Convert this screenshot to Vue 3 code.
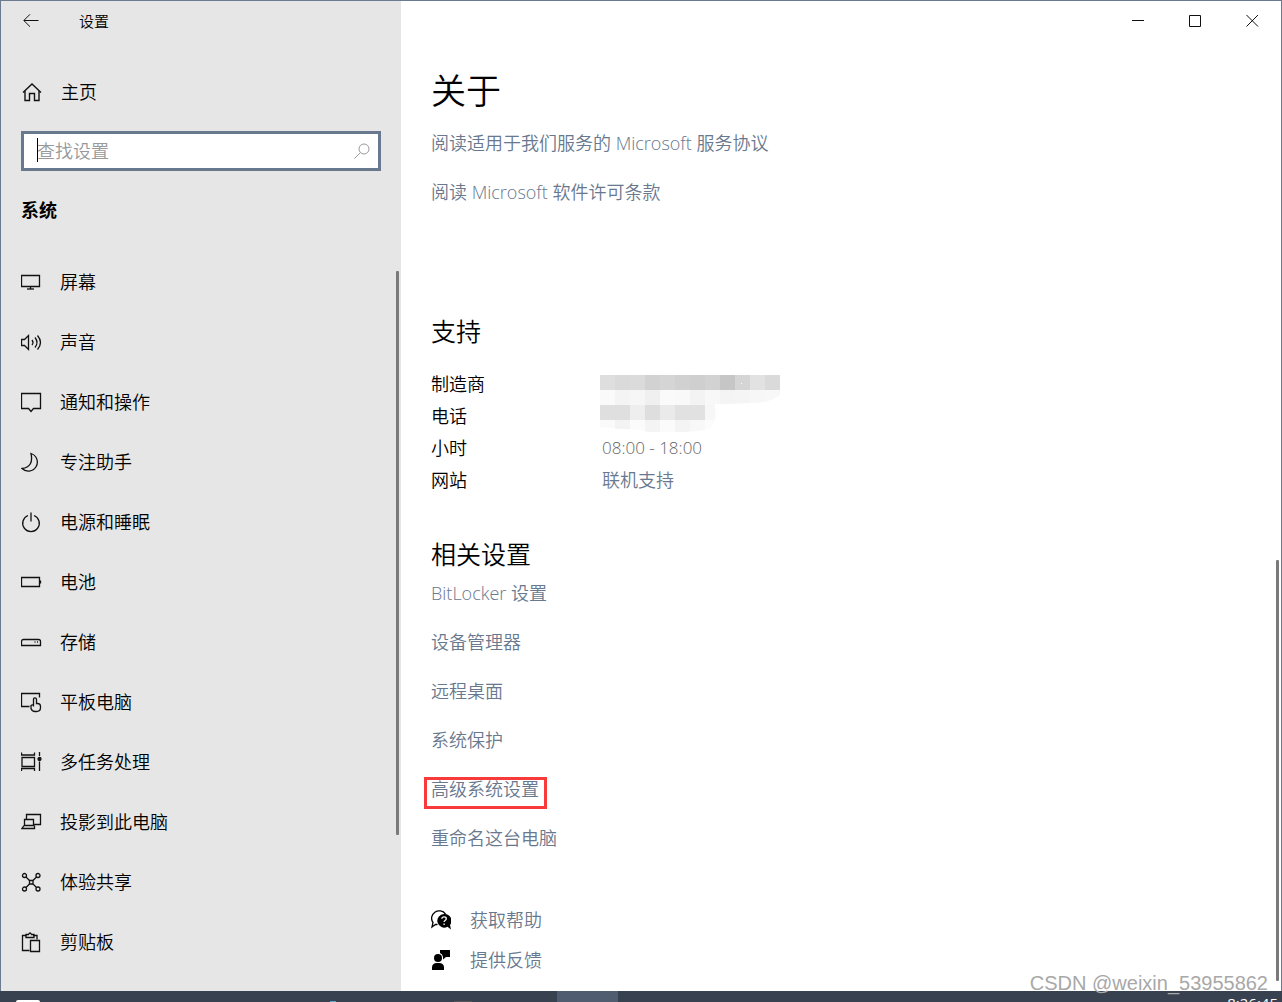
<script setup>
const navItems = [
  { id: 'display', label: '屏幕', paths: ['M.5 3.500h18v11h-18z', 'M9.500 15v2', 'M6 17h7'] },
  { id: 'sound', label: '声音', paths: ['M.5 7.500h3l4-4v14l-4-4h-3z', 'M11 8q2 2.500 0 5', 'M14 5.500q4 5 0 10', 'M16.500 3.500q6 7 0 14'] },
  { id: 'notice', label: '通知和操作', paths: ['M.5 1.500h19v15h-7l-2.500 3-2.500-3h-7z'] },
  { id: 'focus', label: '专注助手', paths: ['M10 1.500A9 9 0 1 1 1 16.500Q13 15 10 1.500z'] },
  { id: 'power', label: '电源和睡眠', paths: ['M7 3.500A8.300 8.300 0 1 0 13 3.500', 'M10 .5v9'] },
  { id: 'battery', label: '电池', paths: ['M.5 5.500h18v9h-18z', 'M19.500 8.500v3'] },
  { id: 'storage', label: '存储', paths: ['M2.500 7.500h15q2 0 2 2v4h-19v-4q0-2 2-2z', 'M13.500 10h1', 'M16 10h1'] },
  { id: 'tablet', label: '平板电脑', paths: ['M8.500 14.500h-8v-13h18v4', 'M12.500 14.500v-7q0-1.700 1.500-1.700t1.500 1.700v4h1q3 0 3 3v1q0 4-4 4h-1.500q-3 0-4-3v-3q1-1 2.500-.5'] },
  { id: 'multitask', label: '多任务处理', paths: ['M.5 .5v2.500h13v-2.500', 'M1 5.500h12.500v9h-12.500z', 'M.5 19v-2.500h13v2.500', 'M18.500 0v4', 'M18.500 9.500v9.500'], dot: true },
  { id: 'project', label: '投影到此电脑', paths: ['M5.500 7v-4.500h14v10h-6.500', 'M3.500 7.500h9v6h-9z', 'M3 13.500l-2 3h12.500v-3'] },
  { id: 'share', label: '体验共享', paths: ['M5 5l3.500 3.500M12 12l3.500 3.500M15.500 5l-3.500 3.500M8.500 12l-3.500 3.500', 'M8.500 8.500h3.500v3.500h-3.500z', 'M1.500 3.500a2 2 0 1 0 4 0a2 2 0 1 0-4 0', 'M15 3.500a2 2 0 1 0 4 0a2 2 0 1 0-4 0', 'M1.500 17a2 2 0 1 0 4 0a2 2 0 1 0-4 0', 'M15 17a2 2 0 1 0 4 0a2 2 0 1 0-4 0'] },
  { id: 'clipboard', label: '剪贴板', paths: ['M8.500 18.500h-7v-15h4M12 3.500h4v4', 'M5 5.500v-3h2.500q1.500-3 3 0h2.500v3z', 'M9.500 8.500h9v11h-9z'] },
]
const relatedLinks = ['BitLocker 设置', '设备管理器', '远程桌面', '系统保护', '高级系统设置', '重命名这台电脑']
const mosaic = [
  ['#dedede', '#dadada', '#dbdbdb', '#d2d2d2', '#d5d5d5', '#d1d1d1', '#cfcfcf', '#d2d2d2', '#c6c6c6', '#d5d5d5', '#e2e2e2', '#dadada'],
  ['#fafafa', '#f4f4f4', '#f6f6f6', '#f0f0f0', '#fafafa', '#f9f9f9', '#f3f3f3', '#f8f8f8', '#f4f4f4', '#f5f5f5', '#f7f7f7', '#f8f8f8'],
  ['#dfdfdf', '#dfdfdf', '#eeeeee', '#dedede', '#eaeaea', '#e1e1e1', '#e1e1e1', '#f7f7f7'],
  ['#fafafa', '#f3f3f3', '#fbfbfb', '#f4f4f4', '#fbfbfb', '#f4f4f4', '#f8f8f8', '#fcfcfc'],
]
</script>

<template>
  <div class="desktop">
    <div class="window">
      <aside class="sidebar">
        <header class="titlebar">
          <button class="back" type="button" aria-label="返回">
            <svg width="16" height="14" viewBox="0 0 16 14"><path d="M15.500 6.500H1M7 .3L.8 6.500 7 12.700" /></svg>
          </button>
          <span class="app-name">设置</span>
        </header>
        <a class="home" href="#home">
          <svg width="20" height="20" viewBox="0 0 20 20"><path d="M1 10.500L10 2l9 8.500M3 9v9.500h4.500v-7h5v7H17V9" /></svg>
          主页
        </a>
        <div class="search">
          <input type="text" placeholder="查找设置" aria-label="查找设置" />
          <span class="caret"></span>
          <svg width="16" height="16" viewBox="0 0 16 16"><circle cx="10" cy="6" r="5" /><path d="M6.500 9.500L.5 15.500" /></svg>
        </div>
        <h2 class="category">系统</h2>
        <nav>
          <a v-for="item in navItems" :key="item.id" :href="'#' + item.id">
            <svg width="21" height="21" viewBox="0 0 21 21">
              <path v-for="d in item.paths" :key="d" :d="d" />
              <circle v-if="item.dot" cx="18.500" cy="7" r="1.500" class="solid" />
            </svg>
            {{ item.label }}
          </a>
        </nav>
        <span class="thumb nav-thumb"></span>
      </aside>

      <main>
        <div class="controls">
          <button type="button" aria-label="最小化"><svg width="13" height="13" viewBox="0 0 13 13"><path d="M0 6.500h12" /></svg></button>
          <button type="button" aria-label="最大化"><svg width="13" height="13" viewBox="0 0 13 13"><path d="M.5 1.500h11v11h-11z" /></svg></button>
          <button type="button" aria-label="关闭"><svg width="13" height="13" viewBox="0 0 13 13"><path d="M.5 1l11.500 11.500M12 1L.5 12.500" /></svg></button>
        </div>
        <div class="content">
          <h1>关于</h1>
          <ul class="links">
            <li><a href="#service">阅读适用于我们服务的 Microsoft 服务协议</a></li>
            <li><a href="#license">阅读 Microsoft 软件许可条款</a></li>
          </ul>

          <h2 class="support-title">支持</h2>
          <table>
            <tbody>
              <tr>
                <th scope="row">制造商</th>
                <td class="masked" rowspan="2">
                  <svg width="180" height="57" viewBox="0 0 180 57" aria-hidden="true">
                    <clipPath id="masked-area"><path d="M0 0h180v20q-10 8-27 8-18 1-38 1v2q3 17-7 23-12 3-23 3H47q-5-3-28-3-10-2-19-2z" /></clipPath>
                    <g clip-path="url(#masked-area)">
                      <template v-for="(row, y) in mosaic" :key="y">
                        <rect v-for="(fill, x) in row" :key="x" :x="x * 15" :y="y * 15" width="15" height="15" :fill="fill" />
                      </template>
                      <rect x="141" y="8" width="1" height="1" fill="#fff" />
                    </g>
                  </svg>
                </td>
              </tr>
              <tr><th scope="row">电话</th></tr>
              <tr><th scope="row">小时</th><td class="hours">08:00 - 18:00</td></tr>
              <tr><th scope="row">网站</th><td><a href="#support">联机支持</a></td></tr>
            </tbody>
          </table>

          <h2 class="related-title">相关设置</h2>
          <ul class="links">
            <li v-for="link in relatedLinks" :key="link">
              <a :href="'#' + link" :class="{ marked: link === '高级系统设置' }">{{ link }}</a>
            </li>
          </ul>

          <div class="assist">
            <a href="#help">
              <svg width="20" height="20" viewBox="0 0 20 20">
                <path class="line" d="M6.500 14.500H4.500L1 17l1-4.500A7 6.800 0 1 1 14.500 4" />
                <path d="M13 4a6.800 6.800 0 1 0 3.500 12.700L20 19.500l-1-4.500A6.800 6.800 0 0 0 13 4z" />
                <path class="mark" d="M10.800 8.800q.2-2 2.300-2t2.200 1.800q0 1.200-1.200 1.900-1 .6-1 1.500M13.100 13.500v1.500" />
              </svg>
              获取帮助
            </a>
            <a href="#feedback">
              <svg width="20" height="20" viewBox="0 0 20 20">
                <circle cx="7" cy="8" r="4" />
                <path d="M1 20v-2.500q0-4.500 5-4.500h2q5 0 5 4.500V20zM9 0h10v7h-4l-3 2.500V7q-.5-3-3-4z" />
              </svg>
              提供反馈
            </a>
          </div>
        </div>
        <span class="thumb page-thumb"></span>
      </main>
    </div>
    <footer class="taskbar">
      <span class="start"></span>
      <span class="browser"></span>
      <span class="folder"></span>
      <span class="active"></span>
      <time>8:26:45</time>
    </footer>
    <span class="watermark">CSDN @weixin_53955862</span>
  </div>
</template>

<style>
body {
  margin: 0;
}
</style>

<style scoped>
* {
  box-sizing: border-box;
}
.desktop {
  position: relative;
  display: flex;
  flex-direction: column;
  min-height: 100vh;
  font-family: "Open Sans", "Noto Sans CJK SC", sans-serif;
  font-size: 18px;
  font-weight: 350;
  line-height: 24px;
  color: #000;
}
.window {
  flex: 1;
  display: flex;
  border: 1px solid #6b7a90;
  border-bottom: 0;
  background: #fff;
}
a {
  color: #68788e;
  text-decoration: none;
}
button {
  display: flex;
  align-items: center;
  justify-content: center;
  padding: 0;
  border: 0;
  background: none;
}
svg {
  flex: none;
  fill: none;
  stroke: #111;
}
h1,
h2 {
  margin: 0;
  font-weight: 350;
}
.sidebar {
  position: relative;
  flex: none;
  width: 400px;
  padding: 0 20px;
  background: #e6e6e6;
}
.titlebar {
  display: flex;
  align-items: center;
  height: 40px;
}
.back {
  width: 20px;
  height: 40px;
}
.app-name {
  margin-left: 38px;
  font-size: 15px;
}
.home {
  display: flex;
  align-items: center;
  gap: 19px;
  height: 40px;
  margin: 31px 0 19px;
  padding-left: 1px;
  color: #000;
}
.home svg {
  stroke-width: 1.4;
}
.search {
  position: relative;
  display: flex;
  align-items: center;
  height: 40px;
  padding-right: 8px;
  border: 3px solid #68788e;
  background: #fff;
}
.search input {
  flex: 1;
  min-width: 0;
  height: 34px;
  padding: 0 13px;
  border: 0;
  outline: 0;
  background: none;
  font: inherit;
}
.search input::placeholder {
  color: #999;
  opacity: 1;
}
.search svg {
  stroke: #999;
}
.caret {
  position: absolute;
  left: 13px;
  top: 4px;
  width: 1px;
  height: 24px;
  background: #000;
}
.category {
  margin: 19px 0 22px;
  font-size: 18px;
  line-height: 40px;
  font-weight: 700;
}
nav a {
  display: flex;
  align-items: center;
  gap: 18px;
  height: 60px;
  color: #000;
}
nav svg {
  stroke-width: 1.3;
}
.solid {
  fill: #111;
}
.thumb {
  position: absolute;
  border-radius: 1px;
  background: #7a7a7a;
}
.nav-thumb {
  top: 270px;
  right: 2px;
  width: 3px;
  height: 564px;
}
.page-thumb {
  top: 559px;
  right: 2px;
  bottom: 10px;
  width: 3px;
}
main {
  position: relative;
  flex: 1;
  min-width: 0;
}
.controls {
  display: flex;
  justify-content: flex-end;
}
.controls button {
  width: 57px;
  height: 39px;
}
.content {
  padding: 27px 30px 10px;
}
h1 {
  margin-bottom: 3px;
  font-size: 35px;
  line-height: 48px;
}
.content h2 {
  font-size: 25px;
  line-height: 32px;
}
.links {
  margin: 0;
  padding: 0;
  list-style: none;
}
.links li {
  display: flex;
  align-items: center;
  height: 49px;
}
.marked {
  position: relative;
}
.marked::after {
  content: "";
  position: absolute;
  inset: 0 -8px -8px -7px;
  border: 3px solid #f93a3a;
}
.content .support-title {
  margin: 99px 0 21px;
}
table {
  border-collapse: collapse;
}
tr {
  height: 32px;
}
th {
  width: 169px;
  padding: 0;
  font-weight: 350;
  text-align: left;
}
td {
  padding: 0 2px;
  color: #666;
}
.hours {
  font-size: 17px;
}
.masked {
  padding: 7px 0 0;
  vertical-align: top;
}
.masked svg {
  display: block;
  stroke: none;
}
.content .related-title {
  margin: 42px 0 -2px;
}
.assist {
  margin-top: 38px;
}
.assist a {
  display: flex;
  align-items: center;
  gap: 19px;
  height: 40px;
}
.assist svg {
  fill: #000;
  stroke: none;
}
.assist .line,
.assist .mark {
  fill: none;
  stroke: #000;
  stroke-width: 1.3;
}
.assist .mark {
  stroke: #fff;
}
.taskbar {
  display: flex;
  align-items: flex-end;
  height: 11px;
  padding-right: 4px;
  overflow: hidden;
  background: #38414f;
}
.start {
  width: 24px;
  height: 2px;
  margin-left: 16px;
  border-radius: 2px 2px 0 0;
  background: #fff;
}
.browser {
  width: 6px;
  height: 1px;
  margin-left: 290px;
  background: #5aa9c9;
}
.folder {
  width: 18px;
  height: 1px;
  margin-left: 118px;
  background: #555;
}
.active {
  width: 61px;
  height: 11px;
  margin-left: 85px;
  background: #505c6f;
}
time {
  align-self: flex-start;
  margin: 2px 0 0 auto;
  font-size: 15px;
  font-weight: 400;
  line-height: 20px;
  color: #fff;
}
.watermark {
  position: absolute;
  right: 14px;
  bottom: 7px;
  font: 20px/24px "Liberation Sans", sans-serif;
  color: #a8a8a8;
}
</style>
